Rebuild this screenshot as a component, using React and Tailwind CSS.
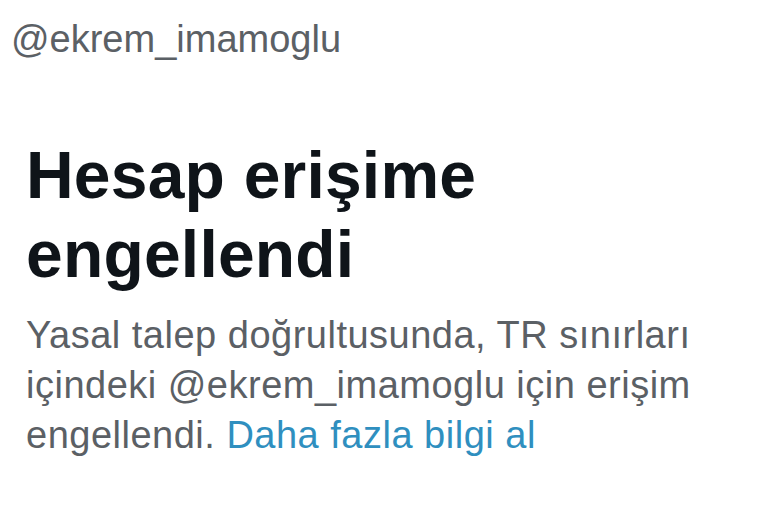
const App = () => {
  return (
    <div className="w-[775px] h-[527px] bg-white overflow-hidden" style={{ fontFamily: '"Liberation Sans", Arial, sans-serif' }}>
      {/* handle */}
      <div className="pt-[17px] pl-[11px] text-[38px] leading-[44px] text-[#5b6065]">
        @ekrem_imamoglu
      </div>

      {/* blocked notice */}
      <div className="pl-[26px] pt-[75px]">
        <h1 className="text-[66px] leading-[79px] font-bold text-[#0f1419] tracking-[0.2px]">
          Hesap erişime
          <br />
          engellendi
        </h1>
        <p className="mt-[16px] text-[38px] leading-[50px] text-[#5b6065] tracking-[0.5px]">
          Yasal talep doğrultusunda, TR sınırları
          <br />
          içindeki @ekrem_imamoglu için erişim
          <br />
          engellendi. <span className="text-[#2f8fbf]">Daha fazla bilgi al</span>
        </p>
      </div>
    </div>
  );
};

export default App;
